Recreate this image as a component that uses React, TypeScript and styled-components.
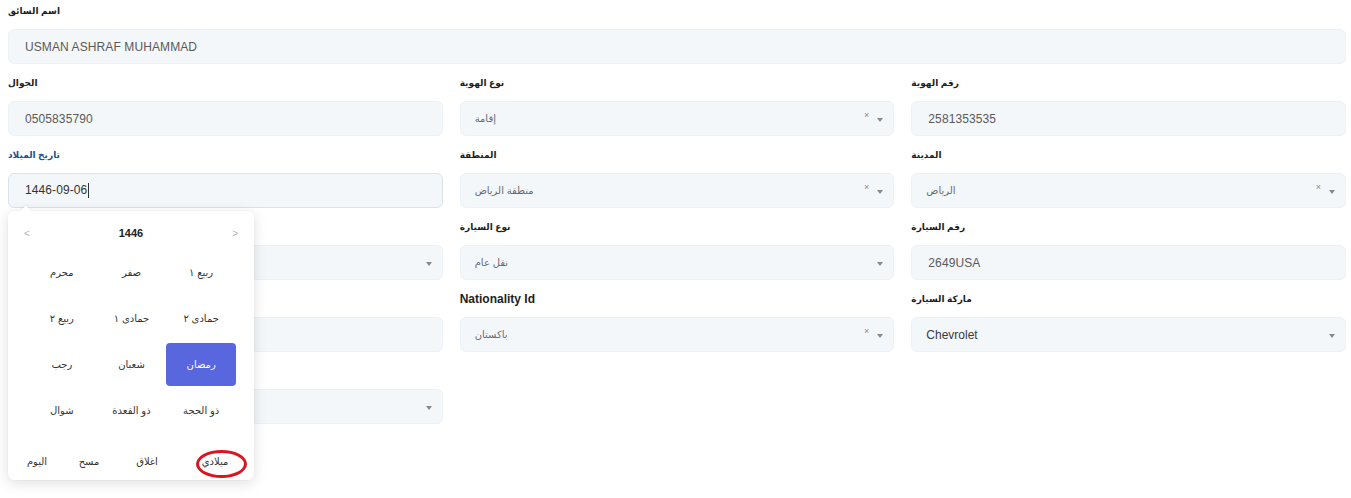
import React from "react";
import styled, { createGlobalStyle } from "styled-components";

const Global = createGlobalStyle`
  html, body { margin: 0; padding: 0; background: #ffffff; }
  body { font-family: "Liberation Sans", "DejaVu Sans", Arial, sans-serif; }
  * { box-sizing: border-box; }
`;

const Page = styled.div`
  min-height: 498px;
  padding: 4px 5px 0 8px;
`;

const Grid = styled.div`
  display: grid;
  grid-template-columns: repeat(3, 1fr);
  column-gap: 17px;
`;

const Field = styled.div<{ $full?: boolean; $raised?: boolean }>`
  position: relative;
  z-index: ${(p) => (p.$raised ? 5 : "auto")};
  grid-column: ${(p) => (p.$full ? "1 / -1" : "auto")};
  margin-bottom: 12px;
`;

const Label = styled.div<{ $active?: boolean; $latin?: boolean }>`
  height: 14px;
  line-height: 14px;
  font-size: ${(p) => (p.$latin ? "12px" : "9px")};
  font-weight: bold;
  color: ${(p) => (p.$active ? "#1f4f8f" : "#1e1e1e")};
  margin-bottom: 11px;
  white-space: nowrap;
`;

const Box = styled.div<{ $focus?: boolean }>`
  height: 35px;
  background: #f4f7fa;
  border: 1px solid ${(p) => (p.$focus ? "#dde2e8" : "#eef2f5")};
  border-radius: 6px;
  display: flex;
  align-items: center;
  padding: 0 11px 0 16px;
`;

const InputText = styled.span<{ $dark?: boolean }>`
  font-size: 12px;
  color: ${(p) => (p.$dark ? "#333" : "#595959")};
  letter-spacing: 0.1px;
`;

const Caret = styled.span`
  display: inline-block;
  width: 1px;
  height: 15px;
  background: #333;
  margin-left: 1px;
  vertical-align: middle;
`;

const SelectText = styled.span<{ $latin?: boolean }>`
  flex: 1;
  font-size: ${(p) => (p.$latin ? "12px" : "10px")};
  color: ${(p) => (p.$latin ? "#3a3a3a" : "#6a6a6a")};
`;

const SelectBox = styled(Box)`
  padding: 0 10px 0 14px;
`;

const Clear = styled.span`
  font-size: 9px;
  color: #8a8a8a;
  margin-right: 8px;
  margin-top: -7px;
`;

const Arrow = styled.span`
  width: 0;
  height: 0;
  border-left: 3px solid transparent;
  border-right: 3px solid transparent;
  border-top: 4px solid #888;
  margin-top: 3px;
`;

const Popup = styled.div`
  position: absolute;
  left: 0;
  top: 63px;
  width: 246px;
  height: 269px;
  background: #fff;
  border-radius: 6px;
  box-shadow: 0 3px 14px rgba(0, 0, 0, 0.13), 0 0 2px rgba(0, 0, 0, 0.05);
  z-index: 10;
  display: flex;
  flex-direction: column;
  &::before {
    content: "";
    position: absolute;
    left: 14px;
    top: -4px;
    width: 8px;
    height: 8px;
    background: #fff;
    transform: rotate(45deg);
    box-shadow: -1px -1px 2px rgba(0, 0, 0, 0.06);
  }
`;

const Header = styled.div`
  display: flex;
  justify-content: space-between;
  align-items: center;
  height: 16px;
  margin: 14px 0 8px;
  padding: 0 16px 0 16px;
`;

const Nav = styled.span`
  font-size: 10px;
  color: #b5b5b5;
`;

const Year = styled.span`
  font-size: 11px;
  font-weight: bold;
  color: #222;
`;

const Months = styled.div`
  display: grid;
  grid-template-columns: repeat(3, 1fr);
  grid-auto-rows: 46px;
  padding: 0 18px 0 19px;
`;

const Month = styled.div<{ $selected?: boolean }>`
  align-self: center;
  height: 43px;
  display: flex;
  align-items: center;
  justify-content: center;
  border-radius: 4px;
  font-size: 10px;
  color: ${(p) => (p.$selected ? "#fff" : "#333")};
  background: ${(p) => (p.$selected ? "#5867dd" : "transparent")};
`;

const Footer = styled.div`
  position: relative;
  flex: 1;
  display: grid;
  grid-template-columns: 58px 46px 70px 66px;
  align-items: end;
  padding-bottom: 10px;
`;

const FootItem = styled.span`
  text-align: center;
  font-size: 10px;
  line-height: 16px;
  color: #333;
`;

const Circle = styled.span`
  position: absolute;
  left: 188px;
  bottom: 2px;
  width: 51px;
  height: 28px;
  border: 3px solid #dc1420;
  border-radius: 50%;
`;

const months = [
  "محرم",
  "صفر",
  "ربيع ١",
  "ربيع ٢",
  "جمادى ١",
  "جمادى ٢",
  "رجب",
  "شعبان",
  "رمضان",
  "شوال",
  "ذو القعدة",
  "ذو الحجة",
];

const Select: React.FC<{ value?: string; clear?: boolean; latin?: boolean }> = ({
  value,
  clear,
  latin,
}) => (
  <SelectBox>
    <SelectText $latin={latin}>{value}</SelectText>
    {clear && <Clear>×</Clear>}
    <Arrow />
  </SelectBox>
);

const Calendar: React.FC = () => (
  <Popup>
    <Header>
      <Nav>&lt;</Nav>
      <Year>1446</Year>
      <Nav>&gt;</Nav>
    </Header>
    <Months>
      {months.map((m) => (
        <Month key={m} $selected={m === "رمضان"}>
          {m}
        </Month>
      ))}
    </Months>
    <Footer>
      <FootItem>اليوم</FootItem>
      <FootItem>مسح</FootItem>
      <FootItem>اغلاق</FootItem>
      <FootItem>ميلادي</FootItem>
      <Circle />
    </Footer>
  </Popup>
);

export default function App() {
  return (
    <Page>
      <Global />
      <Grid>
        <Field $full>
          <Label>اسم السائق</Label>
          <Box>
            <InputText>USMAN ASHRAF MUHAMMAD</InputText>
          </Box>
        </Field>

        <Field>
          <Label>الجوال</Label>
          <Box>
            <InputText>0505835790</InputText>
          </Box>
        </Field>
        <Field>
          <Label>نوع الهوية</Label>
          <Select value="إقامة" clear />
        </Field>
        <Field>
          <Label>رقم الهوية</Label>
          <Box>
            <InputText>2581353535</InputText>
          </Box>
        </Field>

        <Field $raised>
          <Label $active>تاريخ الميلاد</Label>
          <Box $focus>
            <InputText $dark>
              1446-09-06
              <Caret />
            </InputText>
          </Box>
          <Calendar />
        </Field>
        <Field>
          <Label>المنطقة</Label>
          <Select value="منطقة الرياض" clear />
        </Field>
        <Field>
          <Label>المدينة</Label>
          <Select value="الرياض" clear />
        </Field>

        <Field>
          <Label>الجنسية</Label>
          <Select />
        </Field>
        <Field>
          <Label>نوع السيارة</Label>
          <Select value="نقل عام" />
        </Field>
        <Field>
          <Label>رقم السيارة</Label>
          <Box>
            <InputText>2649USA</InputText>
          </Box>
        </Field>

        <Field>
          <Label>رقم الرخصة</Label>
          <Box />
        </Field>
        <Field>
          <Label $latin>Nationality Id</Label>
          <Select value="باكستان" clear />
        </Field>
        <Field>
          <Label>ماركة السيارة</Label>
          <Select value="Chevrolet" latin />
        </Field>

        <Field>
          <Label>الشركة</Label>
          <Select />
        </Field>
      </Grid>
    </Page>
  );
}
